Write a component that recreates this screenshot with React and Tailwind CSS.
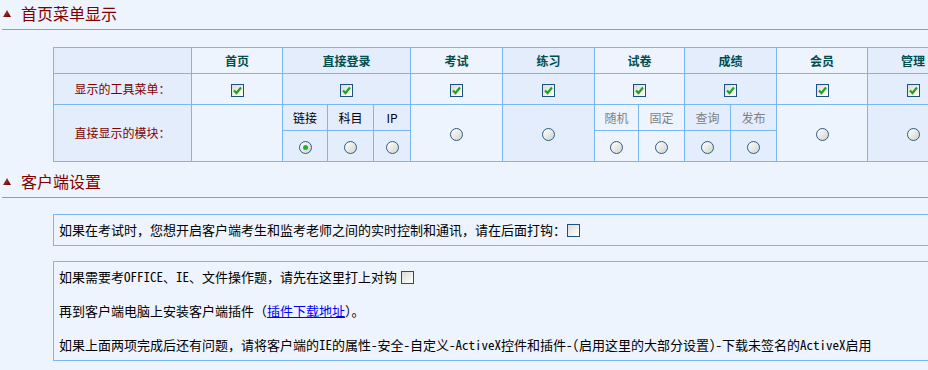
import React from 'react';

const LIGHT = 'bg-[#eef4fe]';
const DARK = 'bg-[#e3edfc]';

function Triangle() {
  return (
    <svg width="8" height="7" viewBox="0 0 8 7" className="shrink-0">
      <defs>
        <linearGradient id="tri" x1="0" y1="0" x2="1" y2="1">
          <stop offset="0" stopColor="#c04040" />
          <stop offset="1" stopColor="#5a0000" />
        </linearGradient>
      </defs>
      <polygon points="4,0 8,7 0,7" fill="url(#tri)" />
    </svg>
  );
}

function SectionTitle({ children }) {
  return (
    <div className="ml-[2px] h-[30px] pb-[3px] flex items-center gap-[10px] pl-[1px] border-b border-b-[#a59c82]">
      <Triangle />
      <span className="text-[16px] leading-none text-[#800000]">{children}</span>
    </div>
  );
}

function Check({ checked }) {
  return (
    <span className="inline-flex w-[13px] h-[13px] border border-[#1c5180] bg-gradient-to-br from-[#dcdcd4] to-white items-center justify-center align-middle">
      {checked && (
        <svg width="9" height="9" viewBox="0 0 9 9">
          <path d="M1 4.5 L3.5 7 L8 1.5" stroke="#21a121" strokeWidth="2.2" fill="none" />
        </svg>
      )}
    </span>
  );
}

function Radio({ checked }) {
  return (
    <span className="inline-flex w-[13px] h-[13px] rounded-full border border-[#2b5b8a] bg-gradient-to-br from-white to-[#d4d4cc] items-center justify-center align-middle">
      {checked && <span className="w-[5px] h-[5px] rounded-full bg-[#22b022]" />}
    </span>
  );
}

const cell = 'border border-[#79b7f2] text-center p-0';

export default function App() {
  const cols = [
    { name: '首页', w: 91, bg: LIGHT },
    { name: '直接登录', sub: [['链接', 45, true, false], ['科目', 46, false, false], ['IP', 37, false, false]], bg: DARK },
    { name: '考试', w: 92, bg: LIGHT },
    { name: '练习', w: 92, bg: DARK },
    { name: '试卷', sub: [['随机', 44, false, true], ['固定', 46, false, true]], bg: LIGHT },
    { name: '成绩', sub: [['查询', 46, false, true], ['发布', 46, false, true]], bg: DARK },
    { name: '会员', w: 91, bg: LIGHT },
    { name: '管理', w: 91, bg: DARK },
  ];
  const widths = [138];
  cols.forEach((c) => {
    if (c.sub) c.sub.forEach((s) => widths.push(s[1]));
    else widths.push(c.w);
  });

  return (
    <div
      className="w-[928px] h-[370px] overflow-hidden bg-[#eef4fe] text-black"
      style={{ fontFamily: "'Noto Sans CJK SC', sans-serif" }}
    >
      <SectionTitle>首页菜单显示</SectionTitle>

      <table className="ml-[53px] mt-[17px] border-collapse table-fixed w-[905px] text-[12px]">
        <colgroup>
          {widths.map((w, i) => (
            <col key={i} style={{ width: w }} />
          ))}
        </colgroup>
        <tbody>
          <tr className="h-[26px]">
            <td className={`${cell} ${DARK}`}></td>
            {cols.map((c) => (
              <td
                key={c.name}
                colSpan={c.sub ? c.sub.length : 1}
                className={`${cell} ${c.bg} font-bold text-[#004e4e]`}
              >
                {c.name}
              </td>
            ))}
          </tr>
          <tr className="h-[31px]">
            <td className={`${cell} ${DARK} text-[#800000]`}>显示的工具菜单：</td>
            {cols.map((c) => (
              <td key={c.name} colSpan={c.sub ? c.sub.length : 1} className={`${cell} ${c.bg}`}>
                <Check checked />
              </td>
            ))}
          </tr>
          <tr className="h-[26px]">
            <td rowSpan={2} className={`${cell} ${DARK} text-[#800000]`}>直接显示的模块：</td>
            {cols.map((c) =>
              c.sub ? (
                c.sub.map((s) => (
                  <td key={s[0]} className={`${cell} ${c.bg} ${s[3] ? 'text-[#808080]' : 'text-black'}`}>
                    {s[0]}
                  </td>
                ))
              ) : (
                <td key={c.name} rowSpan={2} className={`${cell} ${c.bg}`}>
                  {c.name !== '首页' && <Radio />}
                </td>
              )
            )}
          </tr>
          <tr className="h-[31px]">
            {cols
              .filter((c) => c.sub)
              .map((c) =>
                c.sub.map((s) => (
                  <td key={s[0]} className={`${cell} ${c.bg}`}>
                    <Radio checked={s[2]} />
                  </td>
                ))
              )}
          </tr>
        </tbody>
      </table>

      <div className="mt-[6px]">
        <SectionTitle>客户端设置</SectionTitle>
      </div>

      <div
        className="ml-[53px] mt-[16px] w-[910px] h-[32px] border border-[#79b7f2] flex items-center pl-[5px] text-[13px] leading-[18px]"
        style={{ fontFamily: "'Noto Sans Mono CJK SC', 'Noto Sans CJK SC', monospace" }}
      >
        <span>如果在考试时，您想开启客户端考生和监考老师之间的实时控制和通讯，请在后面打钩：</span>
        <span className="ml-[1px] flex">
          <Check />
        </span>
      </div>

      <div
        className="ml-[53px] mt-[15px] w-[910px] border border-[#79b7f2] flex flex-col gap-[16px] py-[6px] pl-[5px] text-[13px] leading-[18px]"
        style={{ fontFamily: "'Noto Sans Mono CJK SC', 'Noto Sans CJK SC', monospace" }}
      >
        <div className="flex items-center">
          <span>如果需要考OFFICE、IE、文件操作题，请先在这里打上对钩</span>
          <span className="ml-[4px] flex">
            <Check />
          </span>
        </div>
        <div>
          再到客户端电脑上安装客户端插件（<a href="#" className="text-[#0000ff] underline">插件下载地址</a>）。
        </div>
        <div>如果上面两项完成后还有问题，请将客户端的IE的属性-安全-自定义-ActiveX控件和插件-(启用这里的大部分设置)-下载未签名的ActiveX启用</div>
      </div>
    </div>
  );
}
